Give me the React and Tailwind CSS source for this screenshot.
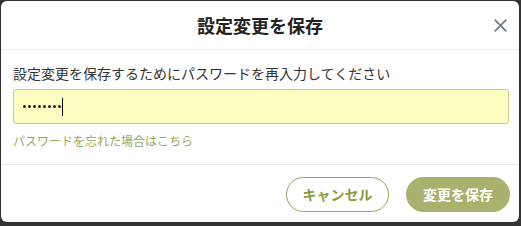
import React from "react";

export default function App() {
  return (
    <div className="w-[521px] h-[226px] bg-[#333333] pt-px pl-px overflow-hidden" style={{ fontFamily: '"Noto Sans CJK JP", "Noto Sans", sans-serif' }}>
      <div className="w-[518px] h-[221px] bg-white rounded-[6px] flex flex-col">
        <div className="h-[49px] border-b border-[#e6eaee] flex items-center justify-center relative">
          <h1 className="text-[18px] font-bold text-[#222222] leading-none">設定変更を保存</h1>
          <button className="absolute right-[10px] top-[16px] text-[#6c7a89]">
            <svg width="17" height="17" viewBox="0 0 16 16" fill="none" stroke="currentColor" strokeWidth="1.6" strokeLinecap="round">
              <path d="M3 3 L13 13 M13 3 L3 13" />
            </svg>
          </button>
        </div>
        <div className="px-[12px] pt-[14px] pb-[15px] border-b border-[#e6eaee]">
          <p className="text-[14px] text-[#333333] leading-[18px]">設定変更を保存するためにパスワードを再入力してください</p>
          <div className="mt-[7px] h-[35px] w-[496px] bg-[#fdfdc2] border-[1.5px] border-[#c4cb8a] rounded-[3px] flex items-center pl-[9px]">
            <div className="flex gap-[2px] items-center">
              {[0, 1, 2, 3, 4, 5, 6, 7].map((i) => (
                <span key={i} className="w-[3px] h-[3px] rounded-full bg-[#222]"></span>
              ))}
            </div>
            <span className="w-px h-[18px] bg-black ml-[1px]"></span>
          </div>
          <a className="block mt-[9px] text-[12px] text-[#9ca55c] leading-[16px]">パスワードを忘れた場合はこちら</a>
        </div>
        <div className="flex justify-end gap-[17px] pt-[12px] pr-[9px]">
          <button className="w-[103px] h-[35px] rounded-full border border-[#9ca24c] text-[#8e993d] font-bold text-[14px]">キャンセル</button>
          <button className="w-[104px] h-[35px] rounded-full bg-[#a9b16c] text-white font-bold text-[14px]">変更を保存</button>
        </div>
      </div>
    </div>
  );
}
